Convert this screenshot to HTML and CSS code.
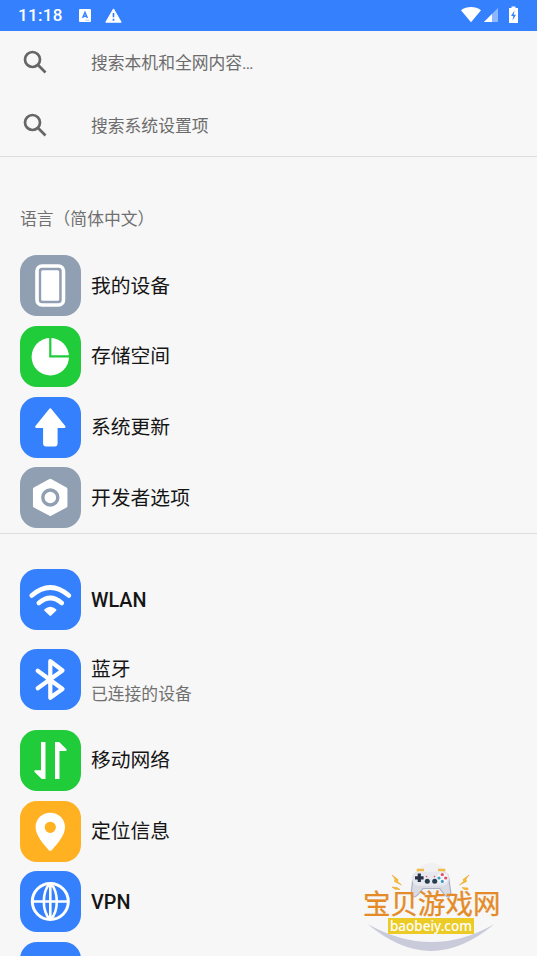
FILE: index.html
```
<!DOCTYPE html>
<html lang="zh-CN">
<head>
<meta charset="utf-8">
<title>设置</title>
<link rel="stylesheet" href="styles.css">
</head>
<body>
<div class="screen">
  <header class="status">
    <span class="time">11:18</span>
    <svg class="st-a" width="12" height="13" viewBox="0 0 12 13"><rect width="12" height="13" rx="1" fill="#fff"/><path d="M3.6 9 6 3.3 8.4 9M4.4 7.2h3.2" fill="none" stroke="#3581fd" stroke-width="1.4"/><path d="M6.5 11.3h4" stroke="#9fc2ff" stroke-width=".8"/></svg>
    <svg class="st-w" width="17" height="15" viewBox="0 0 17 15"><path d="M8.5.9 16.2 14.200H.8z" fill="#fff" stroke="#fff" stroke-width="1" stroke-linejoin="round"/><path d="M8.500 5v4.300M8.500 10.700v2" stroke="#3581fd" stroke-width="1.700"/></svg>
    <svg class="st-right" width="60" height="18" viewBox="0 0 60 18"><path d="M1 4.200C6.500-.1 15.500-.1 21 4.200L11 16.300z" fill="#fff"/><path d="M38 2v14H24z" fill="#8db8ff"/><path d="M32 8v8h-8z" fill="#fff"/><path d="M51.500 .5h4V2H58v15h-9V2h2.500z" fill="#fff"/><path d="M54.500 4.500 51 10h2.300l-.8 4.500L56 8.700h-2.300z" fill="#3581fd"/></svg>
  </header>

  <section class="searches">
    <div class="search"><svg class="mag" viewBox="0 0 24 24"><circle cx="9.500" cy="9.500" r="7.500"/><path d="m14.800 14.800 7.700 7.700"/></svg><span>搜索本机和全网内容<span class="dots">…</span></span></div>
    <div class="search"><svg class="mag" viewBox="0 0 24 24"><circle cx="9.500" cy="9.500" r="7.500"/><path d="m14.800 14.800 7.700 7.700"/></svg><span>搜索系统设置项</span></div>
  </section>

  <h2 class="language">语言（简体中文）</h2>

  <ul class="list first">
    <li class="row"><svg class="icon gray" viewBox="0 0 61 61"><rect x="17" y="11" width="26.500" height="39" rx="5" fill="none" stroke="#fff" stroke-width="3.600"/><rect x="21.200" y="15.200" width="18" height="30.600" rx="1.500" fill="#fff"/></svg><span class="title">我的设备</span></li>
    <li class="row"><svg class="icon green" viewBox="0 0 61 61"><circle cx="30.300" cy="30.800" r="18.700" fill="#fff"/><path d="M30.300 11v19.300H50" fill="none" stroke="#20cc3a" stroke-width="2.200"/></svg><span class="title">存储空间</span></li>
    <li class="row"><svg class="icon blue" viewBox="0 0 61 61"><path d="M30.300 12.500 44.300 29.700H36.400V46.500q0 1.800-1.800 1.800h-8.500q-1.800 0-1.800-1.800V29.700h-7.900z" fill="#fff" stroke="#fff" stroke-width="2.400" stroke-linejoin="round"/></svg><span class="title">系统更新</span></li>
    <li class="row"><svg class="icon gray" viewBox="0 0 61 61"><path d="M30.300 13.500 45.700 22V39L30.300 47.200 14.700 39V22z" fill="#fff" stroke="#fff" stroke-width="3.500" stroke-linejoin="round"/><circle cx="30.300" cy="30.500" r="7.500" fill="none" stroke="#909fb2" stroke-width="3.400"/></svg><span class="title">开发者选项</span></li>
  </ul>

  <ul class="list">
    <li class="row"><svg class="icon blue" viewBox="0 0 61 61"><g fill="none" stroke="#fff" stroke-width="4.600" stroke-linecap="round"><path d="M11.700 26.500Q30.300 10.500 48.900 26.500"/><path d="M18.800 34Q30.300 24 41.800 34"/></g><path d="M24.500 40.200q5.800-5 11.600 0 .8.800 0 1.600l-5 4.800q-.8.700-1.600 0l-5-4.800q-.8-.8 0-1.600z" fill="#fff"/></svg><span class="title latin">WLAN</span></li>
    <li class="row tall"><svg class="icon blue" viewBox="0 0 61 61"><path d="M17.700 21.800 42.500 40 30.300 48.700V12.200L42.500 21.500 17.700 39.300" fill="none" stroke="#fff" stroke-width="4.200" stroke-linecap="round" stroke-linejoin="round"/></svg><div class="copy"><span class="title">蓝牙</span><span class="sub">已连接的设备</span></div></li>
    <li class="row"><svg class="icon green" viewBox="0 0 61 61"><path d="M21 12h4.500v37h-3.700L14.500 42v-1.800H21zM35 12h4.200l7.300 7.300V21h-7V49H35z" fill="#fff"/></svg><span class="title">移动网络</span></li>
    <li class="row"><svg class="icon orange" viewBox="0 0 61 61"><path fill-rule="evenodd" d="M30.300 11.700c-8.300 0-14.700 6.200-14.700 14.300 0 8.300 7.200 16.200 13 22.900q1.700 1.900 3.400 0C37.800 42.200 45 34.300 45 26c0-8.100-6.400-14.300-14.700-14.300zm0 9a5.600 5.600 0 1 1 0 11.200 5.600 5.600 0 0 1 0-11.200z" fill="#fff"/></svg><span class="title">定位信息</span></li>
    <li class="row"><svg class="icon blue" viewBox="0 0 61 61"><g fill="none" stroke="#fff" stroke-width="2.600"><circle cx="30.300" cy="30.500" r="18" stroke-width="3"/><path d="M12.500 30.500h35.600M30.300 12.500v36M29.800 12.500c-8 9-8 27 0 36M30.800 12.500c8 9 8 27 0 36"/></g></svg><span class="title latin">VPN</span></li>
    <li class="row"><svg class="icon blue" viewBox="0 0 61 61"></svg></li>
  </ul>

  <div class="badge">
    <svg class="badge-art" viewBox="0 0 170 101">
      <circle cx="81" cy="25" r="17" fill="#f1f1f3"/>
      <path d="M17.500 69Q82 105 144.500 69 112 96 81 96T17.500 69z" fill="#c9cada"/>
      <path d="M68 16.500V15h6M94 16.500V15h-6" fill="none" stroke="#edbd46" stroke-width="2.500"/>
      <path d="M68 17.500h25q5 0 5.700 5l2 14.500q.5 4.500-3 5-2 0-8-8.500H73q-6 8.500-9 8.500-3.500-.5-2.700-5L63 22.500q.500-5 5-5z" fill="#d9dae4" stroke="#aeb1c2" stroke-width="1.200"/>
      <path d="M68 16.800h25q6 0 6 6 0 7-6 8H68q-6-1-6-8 0-6 6-6z" fill="#e7e8ef"/>
      <path d="M69.300 18.500v8.500M65 22.800h8.600" stroke="#263148" stroke-width="3.200"/>
      <g fill="#263c50"><circle cx="77.300" cy="26.200" r="2.500"/><circle cx="84.700" cy="26.200" r="2.500"/></g>
      <circle cx="92.300" cy="23" r="5.300" fill="#f8f8fb"/>
      <g fill="#e44d62"><circle cx="92.300" cy="19.600" r="1.600"/><circle cx="95.700" cy="23" r="1.600"/><circle cx="76.500" cy="21.500" r=".8"/><circle cx="84.500" cy="21.500" r=".8"/></g>
      <g fill="#3f9cc6"><circle cx="89" cy="23" r="1.600"/><circle cx="92.300" cy="26.400" r="1.600"/></g>
      <g fill="#f8be28" stroke="#e69b28" stroke-width=".5"><path d="m42 20 6 4.500-.5 2 4 3.500-7-3.500.5-2.500zM42 32l5 .5 3 2-5-.3zM119 20l-6 4.500.5 2-4 3.500 7-3.500-.5-2.500zM118 33l-6-.5 2 2 4 .2z"/></g>
    </svg>
    <span class="badge-name">宝贝游戏网</span>
    <span class="badge-url">baobeiy.com</span>
  </div>
</div>
</body>
</html>
```
FILE: styles.css
```
* { box-sizing: border-box; }
body {
  margin: 0;
  background: #f7f7f7;
  font-family: Roboto, "Noto Sans CJK SC", sans-serif;
  color: #151515;
}
.screen {
  position: relative;
  height: 956px;
  overflow: hidden;
}
.status {
  height: 31px;
  background: #3581fd;
  display: flex;
  align-items: center;
  padding: 0 17px 0 18px;
}
.time {
  width: 61px;
  color: #fff;
  font-size: 17px;
  font-weight: 500;
  letter-spacing: .3px;
  line-height: 31px;
}
.st-w { margin-left: 14px; margin-top: -1px; }
.st-right { margin-left: auto; margin-top: -2px; }
.searches {
  height: 126px;
  border-bottom: 1.5px solid #dedede;
}
.search {
  height: 62.600px;
  display: flex;
  align-items: center;
  padding-left: 23px;
  font-size: 16.800px;
  color: #6c6c6c;
}
.mag {
  width: 24px;
  height: 24px;
  margin-right: 44px;
  fill: none;
  stroke: #666;
  stroke-width: 2.700;
}
.dots { font-family: Roboto, sans-serif; font-size: 17px; }
.language {
  margin: 0;
  height: 93.300px;
  padding: 50px 0 0 20px;
  font-size: 16.800px;
  line-height: 25px;
  font-weight: 400;
  color: #707070;
  font-feature-settings: "halt" 0;
}
.list { list-style: none; margin: 0; padding: 30px 0 0; }
.first { padding: 0; border-bottom: 1.500px solid #dedede; }
.row {
  height: 70.700px;
  display: flex;
  align-items: center;
  gap: 10px;
  padding-left: 20px;
}
.tall { height: 90.300px; }
.icon { width: 61px; height: 61px; border-radius: 17px; flex: none; }
.gray { background: #909fb2; }
.green { background: #20cc3a; }
.blue { background: #3581fd; }
.orange { background: #ffb121; }
.title { font-size: 19.800px; line-height: 26px; padding-top: 2px; }
.latin { font-weight: 500; padding-top: 3px; }
.copy { display: flex; flex-direction: column; padding-top: 1px; }
.copy .title { line-height: 25px; }
.sub { font-size: 16.800px; line-height: 24px; color: #707070; }
.badge {
  position: absolute;
  left: 350px;
  top: 855px;
  width: 170px;
  height: 101px;
}
.badge-art { position: absolute; inset: 0; }
.badge-name {
  position: absolute;
  left: 13px;
  top: 37px;
  font-size: 27.500px;
  line-height: 25px;
  font-weight: 400;
  -webkit-text-stroke: .3px #e48b27;
  color: #e48b27;
  white-space: nowrap;
}
.badge-url {
  position: absolute;
  left: 38px;
  top: 63px;
  width: 86px;
  height: 16px;
  background: #eccb27;
  color: #fff;
  font: 500 13.500px/16px "Noto Sans", sans-serif;
  text-align: center;
}
```
